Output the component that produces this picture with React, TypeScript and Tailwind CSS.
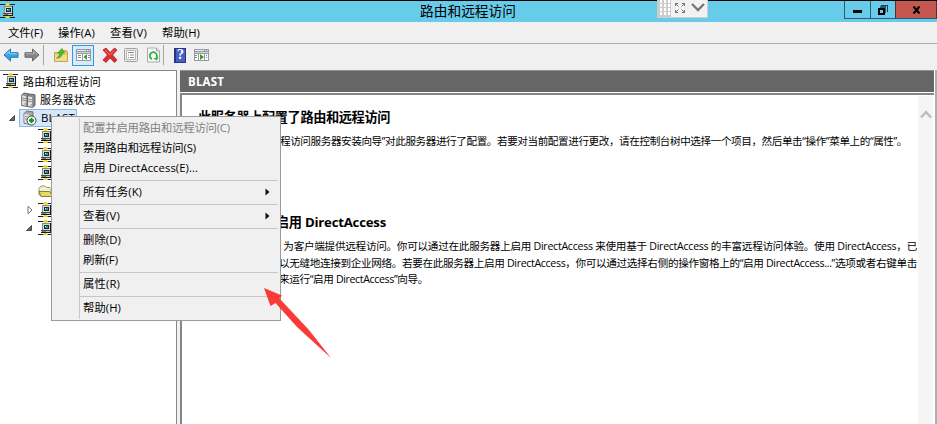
import { useLayoutEffect, useRef, type ReactNode } from 'react';

/** One line of text whose tracking is adjusted to fill a given width. */
function Line({ w, children, className = '' }: { w: number; children: string; className?: string }) {
  const ref = useRef<HTMLSpanElement>(null);
  useLayoutEffect(() => {
    const el = ref.current;
    if (!el) return;
    el.style.letterSpacing = '0px';
    const natural = el.getBoundingClientRect().width;
    el.style.letterSpacing = `${(w - natural) / children.length}px`;
  }, [w, children]);
  return (
    <span ref={ref} className={`inline-block shrink-0 whitespace-pre ${className}`}>
      {children}
    </span>
  );
}

function ServerLink() {
  return (
    <svg width="16" height="16" viewBox="0 0 16 16" className="shrink-0" shapeRendering="crispEdges">
      <path d="M0 1h15v1H0zM0 14h15v1H0z" fill="#222" />
      <path d="M5 1h1v1H5zM9 1h1v1H9zM5 14h1v1H5zM9 14h1v1H9z" fill="#b9a61a" />
      <path d="M6 0h3v3H6zM6 13h3v2H6z" fill="#f0dc2c" />
      <path d="M4 3h9v1H4zM4 4h1v6H4z" fill="#8a8a8a" />
      <path d="M12 3h1v8h-1zM3 12h10v1H3zM12 10h1v2h-1z" fill="#1a1a1a" />
      <path d="M5 4h7v6H5z" fill="#d9d9d9" />
      <path d="M6 5h5v4H6z" fill="#102c33" />
      <path d="M7 6h3v2H7z" fill="#2f9c9c" />
      <path d="M7 6h1v1H7z" fill="#b9f3ef" />
      <path d="M3 10h9v2H3z" fill="#c9c9c9" />
      <path d="M4 11h4v1H4z" fill="#777" />
      <path d="M3 10h9v1H3z" fill="#4a4a4a" />
    </svg>
  );
}

function ServersIcon() {
  return (
    <svg width="16" height="16" viewBox="0 0 16 16" className="shrink-0">
      <path d="M1.500 3l2.500-2 5 .8v10.700l-2.500 2-5-1z" fill="#8f8f8f" stroke="#555" strokeWidth=".8" />
      <path d="M1.800 3.300l4.200.9v9.500l-4.200-.9z" fill="#dedede" />
      <path d="M7.500 4l2.500-2 5 .8v10.700l-2.500 2-5-1z" fill="#8a8a8a" stroke="#4c4c4c" strokeWidth=".8" />
      <path d="M7.900 4.300l4.200.9v9.500l-4.200-.9z" fill="#e4e4e4" />
      <path d="M2 6l4 .8M2 8l4 .8M8 7l4 .8M8 9l4 .8" stroke="#777" strokeWidth=".8" />
      <path d="M10.500 12.500h1.300v1h-1.300zM4.500 11.500h1.200v1H4.500z" fill="#d33" />
    </svg>
  );
}

function ServerOnline() {
  return (
    <svg width="16" height="16" viewBox="0 0 16 16" className="shrink-0">
      <path d="M2 3.500L4.500 1l6.500.8v10.700l-3 2-6-1.300z" fill="#a5a5a5" stroke="#666" strokeWidth=".8" />
      <path d="M2.400 3.900l5.100.8v9l-5.100-1z" fill="#e6e6e6" />
      <path d="M3 6.500l4 .6M3 8.800l4 .6" stroke="#888" strokeWidth=".8" />
      <circle cx="9.500" cy="10.500" r="4.500" fill="#fff" stroke="#333" strokeWidth=".9" />
      <path d="M9.500 7.600l1.200 1.700 1.800 1.200-1.800 1.200-1.200 1.700-1.200-1.700-1.800-1.200 1.800-1.200z" fill="#139629" />
      <path d="M8.600 8h1.800v5H8.600zM7 9.600h5v1.800H7z" fill="#139629" />
    </svg>
  );
}

function Folder() {
  return (
    <svg width="16" height="16" viewBox="0 0 16 16" className="shrink-0">
      <path d="M2 12V5.500L4 3h4l1.500 1.500H13l1 1V12z" fill="#f6f1c6" stroke="#8b8a70" strokeWidth=".9" />
      <path d="M4 13.500L2 8.500h10.500l3.500 5z" fill="#e6db5e" stroke="#77743f" strokeWidth=".9" />
    </svg>
  );
}

function Expander({ open }: { open?: boolean }) {
  return (
    <svg width="8" height="10" viewBox="0 0 8 10" className="shrink-0">
      {open ? (
        <path d="M6.500 2.500v5h-5z" fill="#666" stroke="#333" strokeWidth=".8" />
      ) : (
        <path d="M2 1.200L6 5 2 8.800z" fill="#fff" stroke="#777" strokeWidth="1" />
      )}
    </svg>
  );
}

function NavArrow({ kind }: { kind: 'back' | 'forward' }) {
  const back = kind === 'back';
  return (
    <svg width="16" height="14" viewBox="0 0 16 14" className="shrink-0">
      <path
        d={back ? 'M1 7l6.500-6v3.700H15v4.600H7.500V13z' : 'M15 7L8.500 1v3.700H1v4.600h7.500V13z'}
        fill={back ? '#35a4e3' : '#888'}
        stroke={back ? '#2577ba' : '#686868'}
        strokeWidth="1"
        strokeLinejoin="round"
      />
      <path d={back ? 'M3 6.500l3.500-3.200v2.500H14' : 'M2 5.700h7.500V3.200L13 6.500'} fill="none" stroke={back ? '#8bdcfa' : '#b4b4b4'} />
    </svg>
  );
}

function UpFolder() {
  return (
    <svg width="14" height="16" viewBox="0 0 14 16" className="shrink-0">
      <path d="M.5 14.500v-9h5l1-2h6v1h1v10z" fill="#e8c66c" stroke="#c09c4a" strokeWidth=".9" />
      <path d="M1 8h12v6H1z" fill="#f3dc8d" />
      <path d="M2.500 11c2.300-1 3.300-3 3.300-5H3.500L8 1.500l2.500 4.500H8.300c0 3-2.300 5.500-5.800 5z" fill="#4cc02c" stroke="#2c941d" strokeWidth=".6" />
    </svg>
  );
}

function PaneIcon({ play }: { play?: boolean }) {
  return (
    <svg width="15" height="14" viewBox="0 0 15 14" className="shrink-0" shapeRendering="crispEdges">
      <path d="M0 1h15v12H0z" fill="#939aa4" />
      <path d="M1 2h9v1H1zM11 2h1v1h-1zM13 2h1v1h-1z" fill="#e9edf2" />
      <path d="M1 4h13v1H1z" fill="#d2d6dc" />
      {play ? <path d="M1 6h3v6H1zM5 6h5v6H5zM11 6h3v6h-3z" fill="#fff" /> : <path d="M1 6h5v6H1zM7 6h7v6H7z" fill="#fff" />}
      {play ? (
        <path d="M1 7h2v1H1zM1 9h2v1H1zM12 7h1v1h-1zM12 9h1v1h-1z" fill="#7d8997" />
      ) : (
        <path d="M2 7h3v1H2zM2 9h3v1H2zM12 7h2v1h-2zM12 9h2v1h-2z" fill="#7d8997" />
      )}
      <path d={play ? 'M6 6l4 3-4 3z' : 'M11 6v6L7.500 9z'} fill="#2f9f21" shapeRendering="auto" />
    </svg>
  );
}

function DeleteIcon() {
  return (
    <svg width="16" height="16" viewBox="0 0 16 16" className="shrink-0">
      <path d="M1 3l3-2 4 4.500L12.500 1 15 3l-4.500 5 4.500 5-2.500 2.500L8 11l-4 4.500L1 13l4.500-5z" fill="#dc2e2e" stroke="#b51d22" strokeWidth=".8" />
      <path d="M3 3l5 5 4-4.500" fill="none" stroke="#f27874" strokeWidth="1" />
    </svg>
  );
}

function PropertiesIcon() {
  return (
    <svg width="14" height="16" viewBox="0 0 14 16" className="shrink-0">
      <rect x=".5" y="1.500" width="13" height="13" rx="1" fill="#ececec" stroke="#a0a0a0" />
      <path d="M2.500 3.500h9v9h-9z" fill="#fff" stroke="#b5b5b5" />
      <path d="M4 5.500h6M4 8h1M6 8h4M4 10.500h1M6 10.500h4" stroke="#888" />
    </svg>
  );
}

function RefreshIcon() {
  return (
    <svg width="13" height="16" viewBox="0 0 13 16" className="shrink-0">
      <path d="M.5 1h9l3 3v11H.5z" fill="#f8f8f8" stroke="#aaa" />
      <path d="M9.500 1v3h3" fill="#ddd" stroke="#aaa" />
      <path d="M5 12A3.500 3.500 0 1 1 9.600 10" fill="none" stroke="#29ad35" strokeWidth="1.800" />
      <path d="M11.500 9.500l-1.500 4-3.500-2z" fill="#29ad35" />
    </svg>
  );
}

function HelpIcon() {
  return (
    <div className="flex h-[15px] w-3 shrink-0 items-center justify-center border border-l-2 border-[#26378a] bg-[#4561c6] font-['Liberation_Serif',serif] text-[14px] font-bold leading-none text-white">
      ?
    </div>
  );
}

function Title() {
  return (
    <header className="relative flex h-[22px] shrink-0 items-center border-t border-black bg-[#67cbea]">
      <div className="mb-px"><ServerLink /></div>
      <div className="mb-[2px] flex flex-1 pl-[404px] text-[13.700px]"><Line w={96}>路由和远程访问</Line></div>
      <div className="flex h-[18px] self-start border-b border-l border-[#315b68]">
        <div className="flex w-[26px] items-center justify-center border-r border-[#315b68]">
          <div className="mt-[3px] h-[3px] w-[9px] bg-black" />
        </div>
        <div className="flex w-6 items-center justify-center">
          <svg width="10" height="10" viewBox="0 0 10 10" shapeRendering="crispEdges">
            <path d="M3 0h7v7H9V1H3z" fill="#1c4250" />
            <path d="M2 1h6v7H7V3H2z" fill="#315b68" />
            <path d="M0 3h7v7H0zM2 5v3h3V5z" fill="#000" fillRule="evenodd" />
          </svg>
        </div>
        <div className="flex w-[42px] items-center justify-center border-x border-[#53302c] bg-[#c4574f]">
          <svg width="9" height="8" viewBox="0 0 9 8"><path d="M1.500.5l6 7M7.500.5l-6 7" stroke="#000" strokeWidth="2.200" /></svg>
        </div>
      </div>
      <div className="absolute -top-px left-[657px] flex h-[18px] w-[51px] items-center border-b border-r border-[#cfcfcf] bg-[#f2f2f2]">
        <svg width="14" height="17" viewBox="0 0 14 17" shapeRendering="crispEdges">
          <path d="M0 0h14v17H0z" fill="#cccccc" />
          {[0, 4, 8, 12].map((y) => [3, 7, 11].map((x) => (
            <path key={`${x}-${y}`} d={`M${x} ${y}h2v3h-2z`} fill="#fff" />
          )))}
        </svg>
        <svg width="12" height="12" viewBox="0 0 12 12" className="mb-px ml-[3px]" fill="none" stroke="#777">
          <path d="M1.500 4V1.500H4M1.500 1.500l3 3M8 1.500h2.500V4M10.500 1.500l-3 3M1.500 8v2.500H4M1.500 10.500l3-3M8 10.500h2.500V8M10.500 10.500l-3-3" />
        </svg>
        <svg width="14" height="9" viewBox="0 0 14 9" className="mb-[2px] ml-[5px]"><path d="M1 1l6 6 6-6" fill="none" stroke="#777" strokeWidth="2.300" /></svg>
      </div>
    </header>
  );
}

function Toolbar() {
  return (
    <div className="flex h-[26px] shrink-0 items-center pb-[4px] pl-[3px]">
      <NavArrow kind="back" />
      <div className="ml-[5px]"><NavArrow kind="forward" /></div>
      <div className="ml-[3px] h-5 w-px bg-[#a5a5a5]" />
      <div className="ml-[10px]"><UpFolder /></div>
      <div className="ml-[4px] flex h-[21px] w-[22px] items-center justify-center border border-[#3399df] bg-[#d5eafa]"><PaneIcon /></div>
      <div className="ml-[8px]"><DeleteIcon /></div>
      <div className="ml-[6px]"><PropertiesIcon /></div>
      <div className="ml-[9px]"><RefreshIcon /></div>
      <div className="ml-[3px] h-5 w-px bg-[#a5a5a5]" />
      <div className="ml-[10px]"><HelpIcon /></div>
      <div className="ml-[8px]"><PaneIcon play /></div>
    </div>
  );
}

function Row({ children, pad }: { children: ReactNode; pad: string }) {
  return <div className={`flex h-[18.350px] items-center ${pad}`}>{children}</div>;
}

function Tree() {
  return (
    <aside className="w-[177px] shrink-0 border-r border-t border-[#828790] bg-white pt-px text-[11px]">
      <Row pad="pl-[3px]"><ServerLink /><Line w={78} className="ml-1">路由和远程访问</Line></Row>
      <Row pad="pl-[20px]"><ServersIcon /><Line w={56} className="ml-1">服务器状态</Line></Row>
      <Row pad="pl-[8px]">
        <Expander open />
        <div className="ml-[3px] flex h-[18px] w-[58px] items-center border border-[#8cb9e3] bg-[#d5e8fb] pl-[2px]">
          <ServerOnline /><Line w={34} className="ml-[3px] text-[11.500px]">BLAST</Line>
        </div>
      </Row>
      <Row pad="pl-[38px]"><ServerLink /></Row>
      <Row pad="pl-[38px]"><ServerLink /></Row>
      <Row pad="pl-[38px]"><ServerLink /></Row>
      <Row pad="pl-[37px]"><Folder /></Row>
      <Row pad="pl-[26px]"><Expander /><div className="ml-[4px]"><ServerLink /></div></Row>
      <Row pad="pl-[25px]"><Expander open /><div className="ml-[5px]"><ServerLink /></div></Row>
    </aside>
  );
}

function Details() {
  return (
    <main className="flex min-w-0 flex-1 flex-col border-r-2 border-[#adadad] bg-white">
      <div className="mr-px flex h-[22px] shrink-0 items-center border-t border-[#8f8f8f] bg-[#666] pl-2 text-[11.500px] font-bold text-white"><Line w={36}>BLAST</Line></div>
      <div className="mr-px mt-px flex flex-1 border-l-2 border-t-2 border-[#868686]">
        <div className="flex-1 overflow-hidden pt-[12px] text-[10.600px]">
          <h2 className="h-[20px] pl-[16px] text-[13.200px] font-bold leading-5"><Line w={192}>此服务器上配置了路由和远程访问</Line></h2>
          <p className="mt-[6px] h-[17px] pl-[98px] leading-[17px]"><Line w={627}>程访问服务器安装向导”对此服务器进行了配置。若要对当前配置进行更改，请在控制台树中选择一个项目，然后单击“操作”菜单上的“属性”。</Line></p>
          <h2 className="mt-[62px] h-[20px] pl-[16px] text-[13.200px] font-bold leading-5"><Line w={188}>在此服务器上启用 DirectAccess</Line></h2>
          <p className="mt-[6px] h-[16.500px] pl-[91px] leading-[16.500px]"><Line w={644}>，为客户端提供远程访问。你可以通过在此服务器上启用 DirectAccess 来使用基于 DirectAccess 的丰富远程访问体验。使用 DirectAccess，已</Line></p>
          <p className="h-[16.500px] pl-[97px] leading-[16.500px]"><Line w={638}>以无缝地连接到企业网络。若要在此服务器上启用 DirectAccess，你可以通过选择右侧的操作窗格上的“启用 DirectAccess...”选项或者右键单击</Line></p>
          <p className="h-[16.500px] pl-[97px] leading-[16.500px]"><Line w={149}>来运行“启用 DirectAccess”向导。</Line></p>
        </div>
        <div className="mr-px mt-px flex w-[15px] shrink-0 justify-center bg-[#f5f5f5] pt-[13px]">
          <svg width="12" height="10" viewBox="0 0 12 10"><path d="M1 8.500L6 3l5 5.500" fill="none" stroke="#bdbdbd" strokeWidth="2.500" /></svg>
        </div>
      </div>
    </main>
  );
}

function Item({ label, w, disabled, sub }: { label: string; w: number; disabled?: boolean; sub?: boolean }) {
  return (
    <div className={`flex h-5 items-center justify-between pb-px pl-[3px] pr-[8px] ${disabled ? 'text-[#808080]' : 'text-black'}`}>
      <Line w={w}>{label}</Line>
      {sub && <svg width="5" height="8" viewBox="0 0 5 8"><path d="M.5.5L4.500 4 .5 7.500z" fill="#111" /></svg>}
    </div>
  );
}

function Separator() {
  return <div className="flex h-1 items-center"><div className="h-px w-full bg-[#c6c6c6]" /></div>;
}

function ContextMenu() {
  return (
    <div className="absolute left-[51px] top-[116px] flex h-[205px] w-[230px] border border-[#9b9b9b] bg-[#f0f0f0] py-px pl-[27px] pr-[2px] text-[11.300px]">
      <div className="flex-1 border-l border-[#c8c8c8]">
        <Item label="配置并启用路由和远程访问(C)" w={147} disabled />
        <Item label="禁用路由和远程访问(S)" w={113} />
        <Item label="启用 DirectAccess(E)..." w={115} />
        <Separator />
        <Item label="所有任务(K)" w={59} sub />
        <Separator />
        <Item label="查看(V)" w={37} sub />
        <Separator />
        <Item label="删除(D)" w={38} />
        <Item label="刷新(F)" w={35} />
        <Separator />
        <Item label="属性(R)" w={37} />
        <Separator />
        <Item label="帮助(H)" w={38} />
      </div>
    </div>
  );
}

export default function App() {
  return (
    <div className="relative flex h-[424px] w-[937px] flex-col overflow-hidden bg-[#f0f0f0] font-['Open_Sans','Noto_Sans_CJK_SC',sans-serif] leading-none text-black">
      <Title />
      <nav className="flex h-[22px] shrink-0 items-center gap-[15px] border-b border-[#a9aea6] pl-2 text-[11.300px]">
        <Line w={35}>文件(F)</Line>
        <Line w={37}>操作(A)</Line>
        <Line w={37}>查看(V)</Line>
        <Line w={38}>帮助(H)</Line>
      </nav>
      <Toolbar />
      <div className="flex min-h-0 flex-1">
        <Tree />
        <div className="w-[3px] shrink-0 bg-[#f0f0f0]" />
        <Details />
      </div>
      <ContextMenu />
      <svg width="68" height="71" viewBox="0 0 68 71" className="absolute left-[264px] top-[288px]">
        <path d="M0 0l18 7.500-2.500 3L45 42l22 28L33 39 11.500 15 6.500 18z" fill="#fb3b37" />
      </svg>
    </div>
  );
}
